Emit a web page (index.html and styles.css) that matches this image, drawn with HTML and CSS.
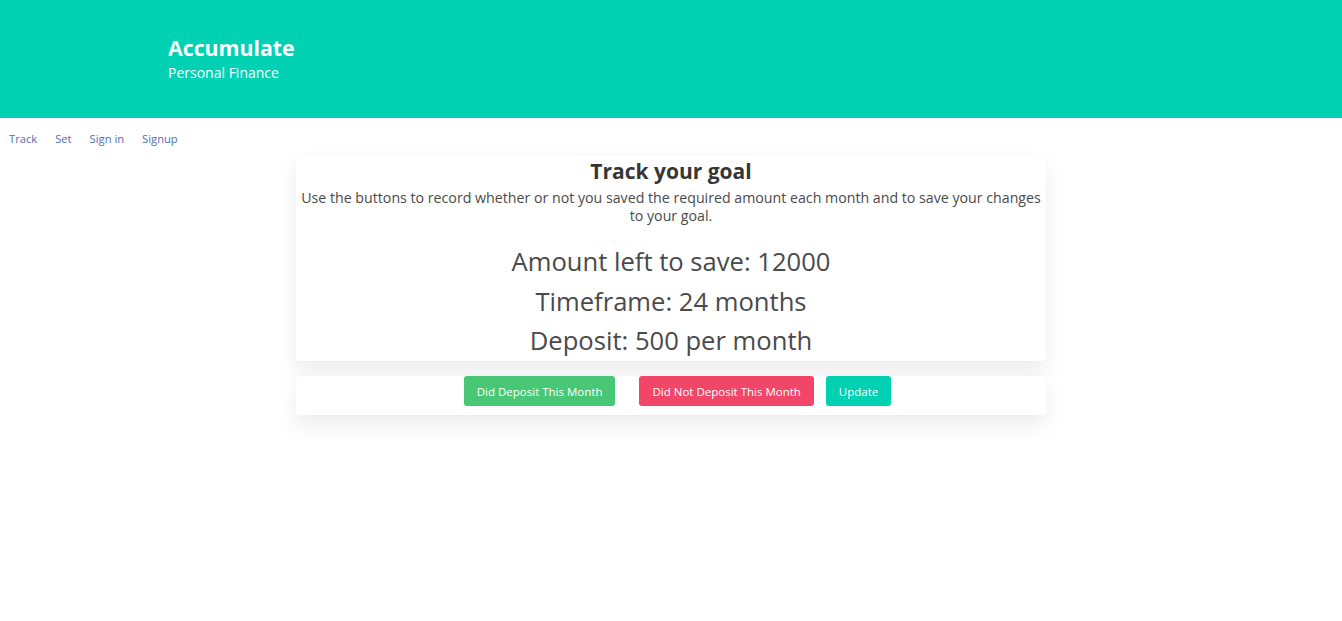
FILE: index.html
```html
<!DOCTYPE html>
<html>
<head>
<meta charset="utf-8">
<link rel="stylesheet" href="styles.css">
</head>
<body>
<section class="hero">
  <div class="hero-body">
    <h1 class="title">Accumulate</h1>
    <h2 class="subtitle">Personal Finance</h2>
  </div>
</section>
<nav class="nav">
  <a href="#">Track</a>
  <a href="#">Set</a>
  <a href="#">Sign in</a>
  <a href="#">Signup</a>
</nav>
<main class="main">
  <div class="card info">
    <h3 class="card-title">Track your goal</h3>
    <p class="desc">Use the buttons to record whether or not you saved the required amount each month and to save your changes to your goal.</p>
    <p class="big">Amount left to save: 12000</p>
    <p class="big">Timeframe: 24 months</p>
    <p class="big">Deposit: 500 per month</p>
  </div>
  <div class="card actions">
    <button class="btn green">Did Deposit This Month</button>
    <button class="btn red">Did Not Deposit This Month</button>
    <button class="btn teal">Update</button>
  </div>
</main>
</body>
</html>
```
FILE: styles.css
```css
* { box-sizing: border-box; }
html, body { margin: 0; padding: 0; }
body {
  font-family: "Open Sans", "Noto Sans", sans-serif;
  color: #4a4a4a;
  background: #fff;
  min-height: 621px;
}
.hero { background: #00d1b2; height: 118px; }
.hero-body { padding: 35px 0 0 168px; }
.title { margin: 0; color: #fff; font-size: 21.3px; font-weight: 700; line-height: 26px; }
.subtitle { margin: 0; color: #fff; font-size: 14px; font-weight: 400; line-height: 24px; }
.nav { display: flex; padding: 13px 0 0 9px; height: 38px; }
.nav a { color: #4e6fb8; text-decoration: none; font-size: 11.2px; line-height: 16px; margin-right: 18px; }
.main { width: 750px; margin: 0 auto; padding-bottom: 60px; }
.card {
  background: #fff;
  border-radius: 3px;
  box-shadow: 0 10px 22px rgba(10,10,10,0.08), 0 0 1px rgba(10,10,10,0.06);
}
.info { padding: 0 2px 2px; text-align: center; }
.card-title { margin: 0; font-size: 21px; font-weight: 700; line-height: 30px; color: #363636; }
.desc { margin: 3px 0 17px; font-size: 14.2px; line-height: 18px; }
.big { margin: 0; font-size: 25.6px; line-height: 40px; color: #4a4a4a; }
.big:first-of-type { margin-top: 1px; }
.big:last-child { line-height: 37px; }
.actions { margin-top: 15px; display: flex; justify-content: center; padding: 0 0 9px 13px; height: 39px; }
.btn {
  border: 0; border-radius: 3px; color: #fff; font-family: inherit;
  font-size: 11.5px; height: 30px; padding: 0 13px; cursor: pointer;
}
.green { background: #48c774; margin-right: 24px; }
.red { background: #f14668; margin-right: 12px; }
.teal { background: #00d1b2; }
```
